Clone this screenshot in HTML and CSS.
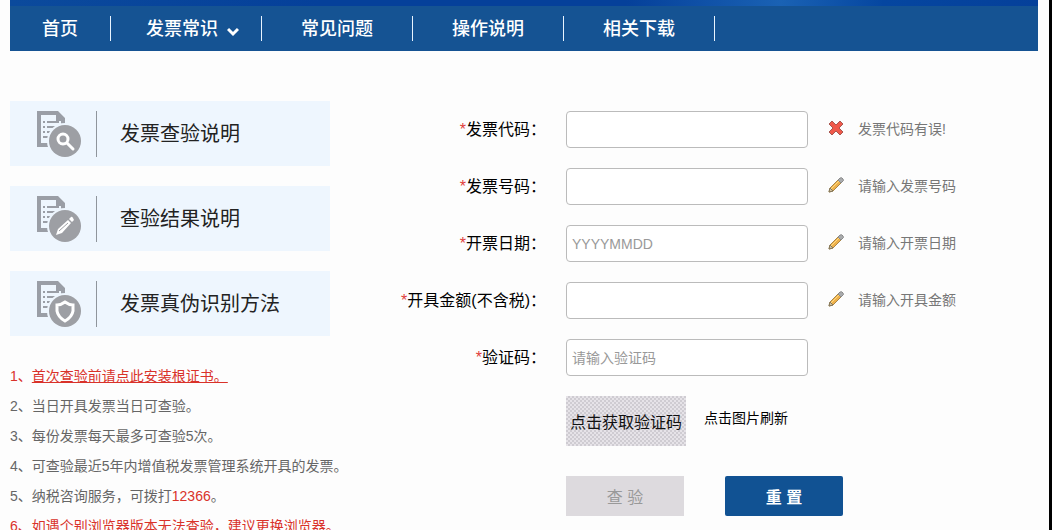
FILE: index.html
```html
<!DOCTYPE html>
<html lang="zh-CN">
<head>
    <meta charset="UTF-8">
    <meta name="viewport" content="width=device-width, initial-scale=1.0">
    <title>发票查验</title>
    <link rel="stylesheet" href="styles.css">
</head>
<body>
    <!-- 图标定义 -->
    <svg class="sprite" aria-hidden="true">
        <symbol id="icon-doc" viewBox="0 0 46 48">
            <path d="M1 1h21l7 7v12h-4v-9h-5V5H5v28h7v4H1z" fill="#9a9ea6"/>
            <path d="M7 12h2M11 12h12M7 17h2M11 17h10M7 22h2M11 22h6M7 27h5" stroke="#9a9ea6" stroke-width="2" fill="none"/>
            <circle cx="29" cy="31" r="18" fill="#eef6fe"/>
            <circle cx="29" cy="31" r="16" fill="#9d9fa4"/>
        </symbol>
        <symbol id="icon-pencil" viewBox="0 0 16 16">
            <path d="M1 15l1-4 9-9 3 3-9 9z" fill="#eeb04a" stroke="#a98648" stroke-width="1"/>
            <path d="M3 12l9-9" stroke="#ffdc83" stroke-width="1"/>
            <path d="M10 3l2-2q2-1 3 1t0 2l-2 2z" fill="#a9abad" stroke="#8a8a8a" stroke-width="1"/>
            <path d="M1 15l1-4 3 3z" fill="#d8c4a0" stroke="#81755a" stroke-width="1"/>
        </symbol>
    </svg>

    <header class="header">
        <div class="banner"></div>
        <nav class="nav">
            <a href="#" class="home">首页</a>
            <a href="#" class="has-menu">发票常识
                <svg class="caret" viewBox="0 0 12 10"><path d="M1 2l5 5 5-5" fill="none" stroke="#fff" stroke-width="3"/></svg>
            </a>
            <a href="#">常见问题</a>
            <a href="#">操作说明</a>
            <a href="#">相关下载</a>
        </nav>
    </header>

    <main class="main">
        <aside class="sidebar">
            <a href="#" class="card">
                <svg class="card-icon" viewBox="0 0 46 48">
                    <use href="#icon-doc"/>
                    <circle cx="27" cy="29" r="5" fill="none" stroke="#fff" stroke-width="3"/>
                    <path d="M31 33l6 6" stroke="#fff" stroke-width="3" stroke-linecap="round"/>
                </svg>
                <span>发票查验说明</span>
            </a>
            <a href="#" class="card">
                <svg class="card-icon" viewBox="0 0 46 48">
                    <use href="#icon-doc"/>
                    <path d="M20 40l2-6 10-9 3 3-9 10zM33 24l2-2q1-1 2 1t1 2l-2 2z" fill="#fff"/>
                    <path d="M23 36l9-8" stroke="#9d9fa4" stroke-width="1"/>
                </svg>
                <span>查验结果说明</span>
            </a>
            <a href="#" class="card">
                <svg class="card-icon" viewBox="0 0 46 48">
                    <use href="#icon-doc"/>
                    <path d="M29 22q4 3 8 3v6q-1 6-8 10-7-4-8-10v-6q4 0 8-3z" fill="#9d9fa4" stroke="#fff" stroke-width="3"/>
                </svg>
                <span>发票真伪识别方法</span>
            </a>

            <div class="notes">
                <p class="red">1、<a href="#">首次查验前请点此安装根证书。</a></p>
                <p>2、当日开具发票当日可查验。</p>
                <p>3、每份发票每天最多可查验5次。</p>
                <p>4、可查验最近5年内增值税发票管理系统开具的发票。</p>
                <p>5、纳税咨询服务，可拨打<span class="red">12366</span>。</p>
                <p class="red">6、如遇个别浏览器版本无法查验，建议更换浏览器。</p>
            </div>
        </aside>

        <form class="form">
            <label for="fpdm"><i>*</i>发票代码：</label>
            <input type="text" id="fpdm">
            <div class="hint">
                <svg viewBox="0 0 16 16"><path d="M4 1l4 4 4-4 3 3-4 4 4 4-3 3-4-4-4 4-3-3 4-4-4-4z" fill="#f0594b" stroke="#a85850" stroke-width="1" stroke-linejoin="round"/></svg>
                <span>发票代码有误!</span>
            </div>

            <label for="fphm"><i>*</i>发票号码：</label>
            <input type="text" id="fphm">
            <div class="hint">
                <svg><use href="#icon-pencil"/></svg>
                <span>请输入发票号码</span>
            </div>

            <label for="kprq"><i>*</i>开票日期：</label>
            <input type="text" id="kprq" placeholder="YYYYMMDD">
            <div class="hint">
                <svg><use href="#icon-pencil"/></svg>
                <span>请输入开票日期</span>
            </div>

            <label for="kjje"><i>*</i>开具金额(不含税)：</label>
            <input type="text" id="kjje">
            <div class="hint">
                <svg><use href="#icon-pencil"/></svg>
                <span>请输入开具金额</span>
            </div>

            <label for="yzm"><i>*</i>验证码：</label>
            <input type="text" id="yzm" placeholder="请输入验证码">

            <div class="captcha-row">
                <button type="button" class="captcha">点击获取验证码</button>
                <span>点击图片刷新</span>
            </div>

            <div class="actions">
                <button type="submit" class="btn" disabled>查 验</button>
                <button type="reset" class="btn btn-primary">重 置</button>
            </div>
        </form>
    </main>
</body>
</html>
```

FILE: styles.css
```css
* {
    box-sizing: border-box;
}
html {
    overflow: hidden;
}
body {
    margin: 0;
    height: 100vh;
    padding: 0 11px 0 10px;
    border-right: 3px solid #000;
    background: #fdfdfd;
    font-family: "Liberation Sans", "Noto Sans CJK SC", sans-serif;
    font-size: 14px;
    color: #000;
}
a {
    color: inherit;
    text-decoration: none;
}
button, input {
    font-family: inherit;
}
.sprite {
    display: none;
}

/* 顶部导航 */
.banner {
    height: 6px;
    background: linear-gradient(90deg, #0b4a9c, #05409a 30%, #05409a 60%, #1a62b4 75%, #0546a0 85%, #05409a);
}
.nav {
    display: flex;
    align-items: center;
    height: 45px;
    background: #155393;
}
.nav a {
    width: 151px;
    padding-top: 2px;
    border-right: 1px solid #e8f4ff;
    color: #fff;
    font-size: 18px;
    font-weight: 500;
    line-height: 23px;
    text-align: center;
}
.nav .home {
    width: 101px;
}
.nav .has-menu {
    display: flex;
    align-items: center;
    gap: 9px;
    padding-left: 35px;
}
.caret {
    width: 12px;
    height: 10px;
    margin-top: 4px;
}

.main {
    display: flex;
    padding-top: 50px;
}

/* 左侧 */
.sidebar {
    flex: 0 0 320px;
    min-width: 0;
}
.card {
    display: flex;
    align-items: center;
    height: 65px;
    margin-bottom: 20px;
    padding-left: 26px;
    background: #eef6fe;
    color: #222;
    font-size: 20px;
}
.card-icon {
    width: 46px;
    height: 48px;
}
.card span {
    margin-left: 14px;
    padding-left: 23px;
    border-left: 1px solid #8f959c;
    line-height: 46px;
}
.notes {
    padding-top: 5px;
    color: #666;
    line-height: 30px;
    white-space: nowrap;
}
.notes p {
    margin: 0;
}
.notes .red {
    color: #d9322a;
}
.notes a {
    text-decoration: underline;
}

/* 查验表单 */
.form {
    flex: 1;
    min-width: 0;
    display: grid;
    grid-template-columns: 216px 242px 1fr;
    gap: 20px;
    align-content: start;
    padding-top: 10px;
}
.form label {
    grid-column: 1;
    font-size: 16px;
    line-height: 37px;
    text-align: right;
    white-space: nowrap;
}
.form label i {
    color: #e0403a;
    font-style: normal;
}
.form input {
    width: 100%;
    height: 37px;
    padding: 0 5px;
    border: 1px solid #bbb;
    border-radius: 4px;
    background: #fff;
    font-size: 14px;
}
.form input::placeholder {
    color: #999;
}
.hint {
    display: flex;
    align-items: center;
    gap: 14px;
    padding-bottom: 3px;
    color: #777;
    white-space: nowrap;
}
.hint svg {
    width: 16px;
    height: 16px;
}
.captcha-row, .actions {
    grid-column: 2 / 4;
    display: flex;
}
.captcha-row {
    gap: 18px;
    line-height: 44px;
}
.captcha {
    width: 120px;
    height: 50px;
    padding: 0;
    border: none;
    background: repeating-conic-gradient(#cfccd2 0 25%, #e6e3e8 0 50%) 0 0 / 4px 4px;
    color: #111;
    font-family: KaiTi, STKaiti, "Noto Sans CJK SC", serif;
    font-size: 16px;
    cursor: pointer;
}
.actions {
    gap: 41px;
    padding-top: 10px;
}
.btn {
    width: 118px;
    height: 40px;
    border: none;
    background: #dddade;
    color: #999;
    font-size: 16px;
}
.btn-primary {
    border-radius: 2px;
    background: #115293;
    color: #fff;
    font-weight: bold;
    cursor: pointer;
}
```
